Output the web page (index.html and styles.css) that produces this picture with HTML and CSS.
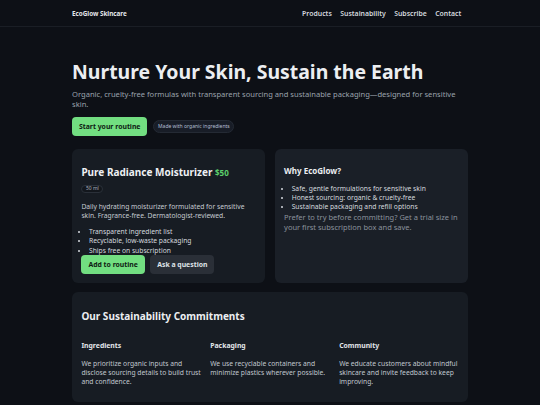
FILE: index.html
```html
<!DOCTYPE html>
<html lang="en">
<head>
<meta charset="utf-8">
<title>EcoGlow Skincare</title>
<link rel="stylesheet" href="styles.css">
</head>
<body>
<header class="site-header">
  <div class="container header-inner">
    <span class="brand">EcoGlow Skincare</span>
    <nav class="nav">
      <a href="#">Products</a>
      <a href="#">Sustainability</a>
      <a href="#">Subscribe</a>
      <a href="#">Contact</a>
    </nav>
  </div>
</header>
<main class="container main">
  <section class="hero">
    <h1>Nurture Your Skin, Sustain the Earth</h1>
    <p class="lead">Organic, cruelty-free formulas with transparent sourcing and sustainable packaging—designed for sensitive skin.</p>
    <div class="hero-actions">
      <a class="btn btn-primary" href="#">Start your routine</a>
      <span class="badge">Made with organic ingredients</span>
    </div>
  </section>

  <div class="grid-two">
    <article class="card product">
      <h2 class="product-title">Pure Radiance Moisturizer <span class="price">$50</span></h2>
      <div class="meta"><span class="chip">50 ml</span></div>
      <p class="desc">Daily hydrating moisturizer formulated for sensitive skin. Fragrance-free. Dermatologist-reviewed.</p>
      <ul class="features">
        <li>Transparent ingredient list</li>
        <li>Recyclable, low-waste packaging</li>
        <li>Ships free on subscription</li>
      </ul>
      <div class="card-actions">
        <a class="btn btn-primary" href="#">Add to routine</a>
        <a class="btn btn-secondary" href="#">Ask a question</a>
      </div>
    </article>
    <aside class="card why">
      <h3 class="why-title">Why EcoGlow?</h3>
      <ul class="features why-list">
        <li>Safe, gentle formulations for sensitive skin</li>
        <li>Honest sourcing: organic &amp; cruelty-free</li>
        <li>Sustainable packaging and refill options</li>
      </ul>
      <p class="why-note">Prefer to try before committing? Get a trial size in your first subscription box and save.</p>
    </aside>
  </div>

  <section class="card commitments">
    <h2 class="section-title">Our Sustainability Commitments</h2>
    <div class="cols">
      <div class="col">
        <h3>Ingredients</h3>
        <p>We prioritize organic inputs and disclose sourcing details to build trust and confidence.</p>
      </div>
      <div class="col">
        <h3>Packaging</h3>
        <p>We use recyclable containers and minimize plastics wherever possible.</p>
      </div>
      <div class="col">
        <h3>Community</h3>
        <p>We educate customers about mindful skincare and invite feedback to keep improving.</p>
      </div>
    </div>
  </section>
</main>
</body>
</html>
```

FILE: styles.css
```css
* { box-sizing: border-box; }

body {
  margin: 0;
  background: #0d1016;
  color: #e6e9ed;
  font-family: "Noto Sans", "Open Sans", sans-serif;
}

.container {
  width: 396px;
  margin: 0 auto;
}

.site-header {
  border-bottom: 1px solid #1a1e25;
}

.header-inner {
  height: 26px;
  display: flex;
  align-items: center;
  justify-content: space-between;
}

.brand {
  font-size: 6.3px;
  font-weight: 700;
  color: #e4e7eb;
}

.nav {
  display: flex;
  gap: 8.4px;
  padding-right: 6.7px;
}

.nav a {
  font-size: 6.9px;
  font-weight: 600;
  color: #d4d8de;
  text-decoration: none;
}

.main {
  padding-top: 33px;
}

.hero h1 {
  margin: 0 0 5px;
  font-size: 19.45px;
  line-height: 24px;
  font-weight: 700;
  color: #eceef1;
}

.lead {
  margin: 0 0 8px;
  font-size: 7.58px;
  line-height: 10px;
  color: #9aa2ac;
}

.hero-actions {
  display: flex;
  align-items: center;
  gap: 6px;
}

.btn {
  display: inline-block;
  font-size: 6.875px;
  line-height: 9px;
  font-weight: 700;
  padding: 5px 7px;
  border-radius: 4px;
  text-decoration: none;
}

.btn-primary {
  background: #72de81;
  color: #0f1b13;
}

.btn-secondary {
  background: #2a2f37;
  color: #dfe3e8;
}

.badge {
  font-size: 5px;
  line-height: 6.5px;
  padding: 2.1px 3.6px;
  border: 1px solid #242a34;
  border-radius: 10px;
  background: #181d27;
  color: #b3bfd3;
}

.grid-two {
  display: grid;
  grid-template-columns: 1fr 1fr;
  gap: 9.4px;
  margin-top: 13.3px;
}

.card {
  background: #171c23;
  border-radius: 6px;
  padding: 9.4px;
}

.product-title {
  margin: 7.6px 0 0;
  font-size: 10px;
  line-height: 12px;
  font-weight: 700;
  color: #eef0f3;
}

.price {
  font-size: 8px;
  color: #5ccf6b;
}

.meta {
  display: flex;
  margin-top: 6px;
}

.chip {
  font-size: 5px;
  line-height: 5.5px;
  padding: 0 3.5px;
  border: 1px solid #2a3039;
  border-radius: 10px;
  background: #13171d;
  color: #aab2bd;
}

.desc {
  margin: 9.2px 0 0;
  font-size: 6.72px;
  line-height: 9.4px;
  color: #c6cbd2;
}

.features {
  margin: 6px 0 0;
  padding-left: 7.6px;
  font-size: 6.72px;
  line-height: 9.4px;
  color: #d5d9df;
}

.card-actions {
  display: flex;
  gap: 5.3px;
}

.why {
  background: #1a1f27;
}

.why-title {
  margin: 7.2px 0 0;
  font-size: 8px;
  line-height: 10px;
  font-weight: 700;
  color: #eceef1;
}

.why-list {
  margin-top: 7.7px;
}

.why-note {
  margin: 0;
  font-size: 7.5px;
  line-height: 10px;
  color: #8a929c;
}

.commitments {
  margin-top: 9px;
}

.section-title {
  margin: 8.7px 0 18.2px;
  font-size: 10px;
  line-height: 12px;
  font-weight: 700;
  color: #eceef1;
}

.cols {
  display: grid;
  grid-template-columns: repeat(3, 1fr);
  gap: 9.4px;
}

.col h3 {
  margin: 0 0 8.6px;
  font-size: 6.875px;
  line-height: 9.4px;
  font-weight: 700;
  color: #e2e5e9;
}

.col p {
  margin: 0 0 6px;
  font-size: 6.72px;
  line-height: 9.4px;
  color: #c1c7cf;
}
```
